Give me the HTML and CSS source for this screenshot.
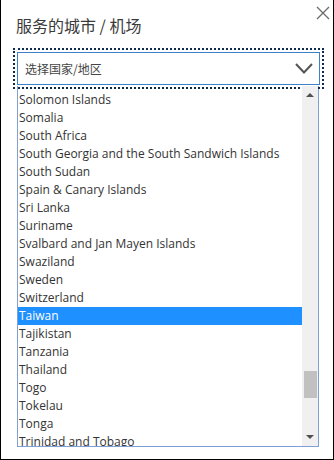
FILE: index.html
```html
<!DOCTYPE html>
<html lang="zh">
<head>
    <meta charset="UTF-8">
    <title>服务的城市 / 机场</title>
    <link rel="stylesheet" href="styles.css">
</head>
<body>
    <div class="dialog">
        <button class="close" type="button" aria-label="关闭">
            <svg width="14" height="14" viewBox="0 0 14 14"><path d="M1 1L13 13M13 1L1 13" stroke="#6b6b6b" stroke-width="1.3" fill="none"/></svg>
        </button>
        <h1>服务的城市 / 机场</h1>

        <div class="picker">
            <div class="select">
                <span>选择国家/地区</span>
                <svg width="18" height="11" viewBox="0 0 18 11"><path d="M1 1L9 9.5L17 1" stroke="#555" stroke-width="2" fill="none"/></svg>
            </div>
        </div>

        <div class="list">
            <ul class="options">
                <li>Solomon Islands</li>
                <li>Somalia</li>
                <li>South Africa</li>
                <li>South Georgia and the South Sandwich Islands</li>
                <li>South Sudan</li>
                <li>Spain &amp; Canary Islands</li>
                <li>Sri Lanka</li>
                <li>Suriname</li>
                <li>Svalbard and Jan Mayen Islands</li>
                <li>Swaziland</li>
                <li>Sweden</li>
                <li>Switzerland</li>
                <li class="selected">Taiwan</li>
                <li>Tajikistan</li>
                <li>Tanzania</li>
                <li>Thailand</li>
                <li>Togo</li>
                <li>Tokelau</li>
                <li>Tonga</li>
                <li>Trinidad and Tobago</li>
            </ul>
            <div class="scrollbar">
                <span class="arrow up"></span>
                <span class="thumb"></span>
                <span class="arrow down"></span>
            </div>
        </div>
    </div>
</body>
</html>
```

FILE: styles.css
```css
body {
    margin: 0;
    font-family: "Open Sans", "Noto Sans CJK SC", sans-serif;
    color: #333;
}

.dialog {
    position: relative;
    width: 334px;
    height: 460px;
    box-sizing: border-box;
    border: 1px solid #000;
    border-top: none;
    padding: 12px 14px 0 15px;
}

.close {
    position: absolute;
    top: 6px;
    right: 3px;
    padding: 0;
    border: none;
    background: none;
}

h1 {
    margin: 0;
    font-size: 16px;
    font-weight: normal;
    line-height: 26px;
    color: #3a3a3a;
    font-family: "Noto Sans CJK SC", sans-serif;
}

.picker {
    margin-top: 12px;
    outline: 2px dotted #0e2b4d;
    padding: 2px;
    width: 307px;
    box-sizing: border-box;
    margin-left: -1px;
}

.select {
    display: flex;
    align-items: center;
    justify-content: space-between;
    height: 33px;
    box-sizing: border-box;
    border: 1px solid #3d80c8;
    padding: 0 6px 0 7px;
    font-size: 12px;
    color: #444;
    font-family: "Noto Sans CJK SC", sans-serif;
}

.list {
    display: flex;
    height: 361px;
    width: 302px;
    margin-left: 1px;
    margin-top: -1px;
    box-sizing: border-box;
    border: 1px solid #7f9fd6;
    border-top: none;
    background: #fff;
}

.options {
    list-style: none;
    margin: 0;
    padding: 5px 0 0;
    flex: 1;
    overflow: hidden;
    font-size: 12px;
}

.options li {
    height: 18px;
    line-height: 18px;
    padding-left: 1px;
    white-space: nowrap;
    color: #333;
}

.options li.selected {
    background: #1e90ff;
    color: #fff;
}

.scrollbar {
    width: 16px;
    background: #f0f0f0;
    position: relative;
}

.arrow {
    position: absolute;
    left: 4px;
    width: 0;
    height: 0;
    border-left: 4px solid transparent;
    border-right: 4px solid transparent;
}

.arrow.up {
    top: 7px;
    border-bottom: 4px solid #505050;
}

.arrow.down {
    bottom: 7px;
    border-top: 4px solid #505050;
}

.thumb {
    position: absolute;
    left: 2px;
    right: 1px;
    top: 285px;
    height: 27px;
    background: #c1c1c1;
}
```
